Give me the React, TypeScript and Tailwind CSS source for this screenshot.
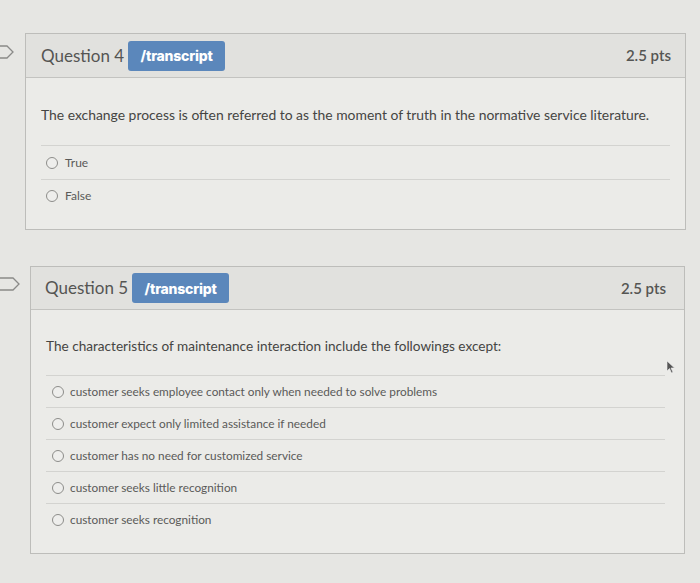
import React from "react";

const Radio = () => (
  <span className="inline-block w-[12px] h-[12px] rounded-full border border-[#8d8d8a] bg-[#eeeeec] shrink-0" />
);

const Badge = () => (
  <span className="inline-flex items-center justify-center h-[30px] w-[97px] rounded-[3px] bg-[#5b87bb] text-white text-[14px] font-extrabold tracking-[-0.2px]" style={{ fontFamily: "Inter, 'Noto Sans', sans-serif" }}>
    /transcript
  </span>
);

const Flag = ({ w }: { w: number }) => (
  <svg width={w} height="14" viewBox={`0 0 ${w} 14`} className="absolute">
    <path d={`M-2 1 H${w - 7} L${w - 1} 7 L${w - 7} 13 H-2`} fill="none" stroke="#8a8a88" strokeWidth="1.3" />
  </svg>
);

export default function App() {
  return (
    <div className="w-[700px] h-[583px] bg-[#e6e6e3] overflow-hidden text-[#4a4a48]" style={{ fontFamily: "Lato, 'Open Sans', sans-serif" }}>
      <div className="pt-[33px] flex flex-col gap-[36px]">
        {/* Question 4 */}
        <div className="relative ml-[25px] w-[661px]">
          <div className="absolute left-[-25px] top-[12px]"><Flag w={14} /></div>
          <div className="border border-[#bdbdba] bg-[#ebebe8]">
            <div className="h-[44px] flex items-center justify-between pl-[15px] pr-[14px] bg-[#e1e1de] border-b border-[#c3c3c0]">
              <div className="flex items-center gap-[4px]">
                <span className="text-[17px] text-[#555553]">Question 4</span>
                <Badge />
              </div>
              <span className="text-[15px] font-semibold text-[#555553]">2.5 pts</span>
            </div>
            <div className="px-[15px] pt-[28px] pb-[17px]">
              <p className="text-[13.9px] text-[#454543] leading-[18px]">The exchange process is often referred to as the moment of truth in the normative service literature.</p>
              <div className="mt-[21px] border-t border-[#d3d3d0]">
                <div className="h-[34px] flex items-center gap-[7px] pl-[5px] border-b border-[#d3d3d0] text-[12px] text-[#5a5a58]">
                  <Radio />True
                </div>
                <div className="h-[32px] flex items-center gap-[7px] pl-[5px] text-[12px] text-[#5a5a58]">
                  <Radio />False
                </div>
              </div>
            </div>
          </div>
        </div>

        {/* Question 5 */}
        <div className="relative ml-[30px] w-[655px]">
          <div className="absolute left-[-30px] top-[11px]"><Flag w={20} /></div>
          <div className="border border-[#bdbdba] bg-[#ebebe8]">
            <div className="h-[43px] flex items-center justify-between pl-[14px] pr-[18px] bg-[#e1e1de] border-b border-[#c3c3c0]">
              <div className="flex items-center gap-[4px]">
                <span className="text-[17px] text-[#555553]">Question 5</span>
                <Badge />
              </div>
              <span className="text-[15px] font-semibold text-[#555553]">2.5 pts</span>
            </div>
            <div className="pl-[15px] pr-[19px] pt-[27px] pb-[17px]">
              <p className="text-[13.6px] text-[#454543] leading-[18px]">The characteristics of maintenance interaction include the followings except:</p>
              <div className="mt-[20px] border-t border-[#d3d3d0]">
                {[
                  "customer seeks employee contact only when needed to solve problems",
                  "customer expect only limited assistance if needed",
                  "customer has no need for customized service",
                  "customer seeks little recognition",
                  "customer seeks recognition",
                ].map((t, i, a) => (
                  <div key={t} className={`h-[32px] flex items-center gap-[6px] pl-[6px] text-[11.8px] text-[#5a5a58] ${i < a.length - 1 ? "border-b border-[#d3d3d0]" : ""}`}>
                    <Radio />{t}
                  </div>
                ))}
              </div>
            </div>
          </div>
          <svg className="absolute left-[636px] top-[94px]" width="10" height="14" viewBox="0 0 10 14">
            <path d="M1 1 L1 11 L3.5 8.5 L5.5 13 L7 12.3 L5 8 L8.5 8 Z" fill="#555" stroke="#eee" strokeWidth="0.6" />
          </svg>
        </div>
      </div>
    </div>
  );
}
